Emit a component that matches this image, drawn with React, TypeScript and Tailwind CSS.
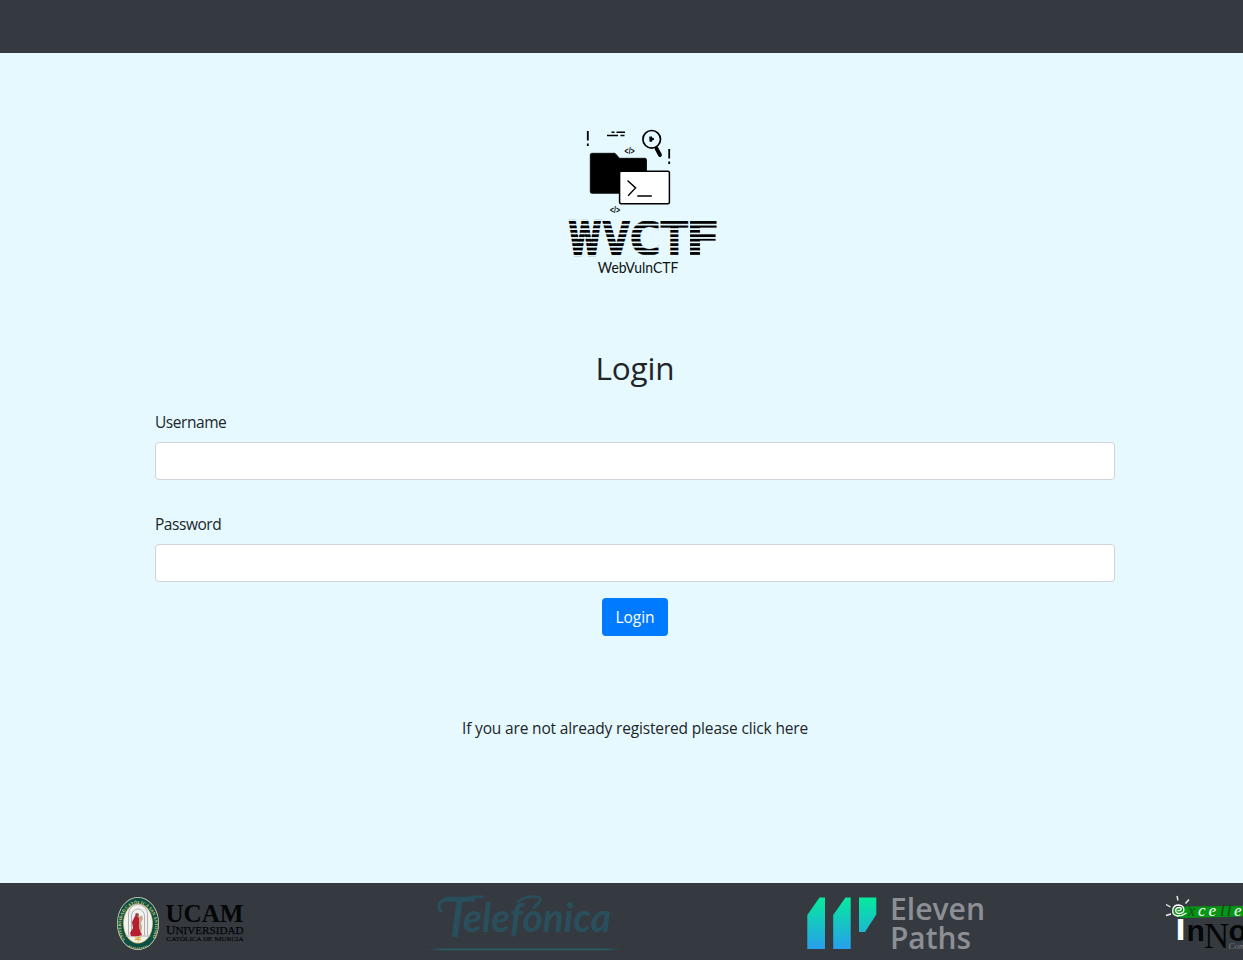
const LETTERS = [
  { char: "W", x: 568.8, width: 32.2, outline: 2.4 },
  { char: "V", x: 602.8, width: 27, outline: 1.4 },
  { char: "C", x: 629.5, width: 31.5, outline: 0.4 },
  { char: "T", x: 660.5, width: 27.6, outline: 0.4 },
  { char: "F", x: 685.5, width: 35, outline: 0.4 },
];

function AppLogo() {
  return (
    <svg className="block h-[160px] w-[165px]" viewBox="560 120 165 160" fill="none" stroke="#000">
      <defs>
        <pattern id="stripes" patternUnits="userSpaceOnUse" x="0" y="221.1" width="10" height="4.43">
          <rect width="10" height="2.7" fill="#000" stroke="none" />
        </pattern>
      </defs>
      <path d="M587.8 131v9.5M587.8 143.5v2.5M669.2 149v9.5M669.2 161.5v2.5" strokeWidth="1.8" />
      <path d="M611.5 132.3h3M616.5 132.3h8.5M607 135.5h11M620.5 135.5h4" strokeWidth="1.5" />
      <circle cx="651.7" cy="139.3" r="8.8" strokeWidth="1.7" />
      <path d="M656.5 148.5l3.5 6.5" strokeWidth="3.8" strokeLinecap="round" />
      <path d="M649.8 136.8l4.2 2.2-4 2.5ZM651.5 136.5v5.3" fill="#000" strokeWidth="1" />
      <path d="M590.3 154.8q0-1.5 1.5-1.5H615l4.5 5H645q1.5 0 1.5 1.5V193.3H591.8q-1.5 0-1.5-1.5Z" fill="#000" strokeWidth=".8" />
      <rect x="619.6" y="171.2" width="49.8" height="32.6" rx="1.5" fill="#fff" strokeWidth="1.5" />
      <path d="M627.5 180.5l8.1 7.4-7.5 7.8M637.3 196h14.5" strokeWidth="1.4" />
      <g className="font-['Liberation_Sans']" fontSize="9" fontWeight="bold" fill="#000" stroke="none">
        <text x="624.6" y="153.500" textLength="10" lengthAdjust="spacingAndGlyphs">&lt;/&gt;</text>
        <text x="610" y="212.500" textLength="10" lengthAdjust="spacingAndGlyphs">&lt;/&gt;</text>
      </g>
      <g className="font-['DejaVu_Sans']" fontSize="46" fontWeight="bold" fill="url(#stripes)" stroke="url(#stripes)">
        {LETTERS.map((l) => (
          <text key={l.char} x={l.x} y="254.8" textLength={l.width} lengthAdjust="spacingAndGlyphs" strokeWidth={l.outline}>
            {l.char}
          </text>
        ))}
      </g>
      <text x="597.8" y="272.6" textLength="80.5" lengthAdjust="spacingAndGlyphs" className="font-['Lato']" fontSize="15" fill="#111" stroke="none">
        WebVulnCTF
      </text>
    </svg>
  );
}

function UcamLogo() {
  return (
    <svg className="block h-[75px] w-[150px]" viewBox="105 885 150 75">
      <defs>
        <path id="ring" d="M125 940A17 22 0 1 1 151 940" />
      </defs>
      <ellipse cx="138" cy="923.5" rx="21" ry="26.5" fill="#e0dcc0" />
      <ellipse cx="138" cy="923.5" rx="20.3" ry="25.8" fill="#0c4f43" />
      <ellipse cx="138" cy="923.5" rx="14.9" ry="20" fill="#c9b96b" />
      <ellipse cx="138" cy="923.5" rx="14.2" ry="19.3" fill="#f1f1ef" />
      <text fontSize="4.4" fill="#d9cf83" className="font-['Liberation_Serif']" fontWeight="bold">
        <textPath href="#ring" textLength="88">UNIVERSIDAD CATÓLICA SAN ANTONIO</textPath>
      </text>
      <path d="M129 946q9 4.5 18 0" fill="none" stroke="#b8b178" strokeWidth="1.5" strokeDasharray="1.2 .8" />
      <path d="M128.5 935V914a9.5 9.5 0 0 1 19 0V935M131.5 935V916a6.5 7 0 0 1 13 0V935M125.5 936h25" fill="none" stroke="#b0b0b0" strokeWidth="1" />
      <path d="M135 916q3-1 4 2l1 5-1 4 3 8q-5 2-11 1l-1-3 3-5-1-6Z" fill="#b51f32" />
      <path d="M139 916.5l3-1 1 3-2 4 1 5-1 6-2-6Z" fill="#c5aa87" />
      <circle cx="137" cy="915" r="1.9" fill="#96404a" />
      <path d="M138 936v5.5M135 937.5l6 2.5M141 937l-6 3" stroke="#e2ab35" strokeWidth="1.1" />
      <g className="font-['Liberation_Serif']" fill="#050607">
        <text x="165.5" y="922" fontSize="25" fontWeight="bold" textLength="78" lengthAdjust="spacingAndGlyphs">UCAM</text>
        <text x="166" y="933.5" fontSize="12.5" textLength="77.5" lengthAdjust="spacingAndGlyphs" stroke="#050607" strokeWidth=".25">
          U<tspan fontSize="10.5">NIVERSIDAD</tspan>
        </text>
        <text x="166" y="940.8" fontSize="7" textLength="77.5" lengthAdjust="spacingAndGlyphs" stroke="#050607" strokeWidth=".15">
          C<tspan fontSize="6">ATÓLICA DE</tspan> M<tspan fontSize="6">URCIA</tspan>
        </text>
      </g>
    </svg>
  );
}

function TelefonicaLogo() {
  return (
    <svg className="block h-[77px] w-[210px]" viewBox="420 883 210 77">
      <defs>
        <linearGradient id="rule">
          <stop offset="0" stopColor="#28515f" stopOpacity="0" />
          <stop offset=".08" stopColor="#28606c" />
          <stop offset=".92" stopColor="#28606c" />
          <stop offset="1" stopColor="#28515f" stopOpacity="0" />
        </linearGradient>
      </defs>
      {/* Flourishes around the wordmark */}
      <path d="M450 898c-8 2-12 5-11 9 0 2 1 3 2 4" fill="none" stroke="#294f5d" strokeWidth="3" strokeLinecap="round" />
      <path d="M470 895.600h15.500q-3 3-9 3H470Z" fill="#294f5d" />
      <path d="M518 902c6-5 14-6 20-5 4 1 3 4-1 6.5" fill="none" stroke="#294f5d" strokeWidth="2.5" strokeLinecap="round" />
      <g fill="#294f5d" className="font-['Lato']" fontStyle="italic">
        <text x="441" y="937" textLength="32" lengthAdjust="spacingAndGlyphs" fontSize="57" fontWeight="400" stroke="#294f5d" strokeWidth=".5">T</text>
        <text x="463" y="932" textLength="148" lengthAdjust="spacingAndGlyphs" fontSize="40" fontWeight="700">elefónica</text>
      </g>
      <rect x="426" y="948.7" width="196" height="1.5" fill="url(#rule)" />
    </svg>
  );
}

function ElevenPathsLogo() {
  return (
    <svg className="block h-[75px] w-[200px]" viewBox="795 885 200 75">
      <defs>
        <linearGradient id="mark" gradientUnits="userSpaceOnUse" x1="0" y1="897" x2="0" y2="949">
          <stop offset="0" stopColor="#05eb9c" />
          <stop offset="1" stopColor="#279fec" />
        </linearGradient>
      </defs>
      <path d="M819.5 897.5H825V949H807.3V915ZM845.5 897.5H850.7V949H833.2V915ZM859 897.5H876.3V914.5L865 932H859Z" fill="url(#mark)" />
      <g className="font-['Open_Sans']" fill="#8d8f94" fontSize="30.5" fontWeight="600">
        <text x="890" y="920" textLength="95" lengthAdjust="spacingAndGlyphs">Eleven</text>
        <text x="890" y="949" textLength="81" lengthAdjust="spacingAndGlyphs">Paths</text>
      </g>
    </svg>
  );
}

function ExcelenciaLogo() {
  return (
    <svg className="block h-[75px] w-[93px]" viewBox="1150 885 93 75">
      <path d="M1173 907.5l14-1 56-.5v10.5l-60 1.5-9-2Z" fill="#079515" />
      <path d="M1166 904.5l4.5 2.5M1177 896l1 4.5M1189 899.5l-3.5 4M1166 915.5l5-1.5" stroke="#eee" strokeWidth="1.4" />
      <path d="M1177.5 910.5c4 1 5-3 2-3-5 0-5 6 0 6 6 0 6-8-1-8.5-7 0-8 10-1 11 4 0 7-1.5 9-3" fill="none" stroke="#fff" strokeWidth="1.3" />
      <text x="1175.200" y="940.3" fontSize="38" fontWeight="bold" fill="#fff" textLength="10.500" lengthAdjust="spacingAndGlyphs" className="font-['Liberation_Sans']">ı</text>
      <g className="font-['Liberation_Serif']" fontStyle="italic">
        <text x="1188" y="915.5" fontSize="16" fill="#17471c">x</text>
        <text x="1198" y="915.5" fontSize="17" fill="#fff" letterSpacing="3">ce</text>
        <text x="1220" y="915.5" fontSize="17" fill="#17471c" letterSpacing="2">ll</text>
        <text x="1234" y="915.5" fontSize="17" fill="#fff">e</text>
        <text x="1228.5" y="949" fontSize="9" fill="#777a80">Com</text>
      </g>
      <g fill="#050607">
        <text x="1186.5" y="940.5" fontSize="30" className="font-['Liberation_Sans']" fontWeight="bold">n</text>
        <text x="1204" y="947.5" fontSize="35" className="font-['Liberation_Serif']">N</text>
        <text x="1228.5" y="940.5" fontSize="30" className="font-['Liberation_Sans']" fontWeight="bold">o</text>
      </g>
    </svg>
  );
}

export default function App() {
  return (
    <div className="flex h-[960px] w-full flex-col overflow-hidden bg-[#e5f9ff] font-['Open_Sans','Noto_Sans',sans-serif] text-base text-[#212529]">
      <header className="h-[53px] shrink-0 bg-[#343a40]" />
      <main className="flex flex-1 flex-col pl-[155px] pr-[128px] pt-[67px]">
        <div className="flex pl-[405px]">
          <AppLogo />
        </div>
        <h1 className="mt-[68px] text-center text-[31.5px] leading-10 tracking-[-0.2px]">Login</h1>
        <form className="mt-[22px] flex flex-col" onSubmit={(e) => e.preventDefault()}>
          <label htmlFor="username" className="h-6 text-[15.5px] leading-[25px] tracking-[-0.45px]">Username</label>
          <input id="username" className="mt-2 h-[38px] rounded border border-[#ced4da] bg-white px-3 outline-none" />
          <label htmlFor="password" className="mt-8 h-6 text-[15.5px] leading-[25px] tracking-[-0.45px]">Password</label>
          <input id="password" type="password" className="mt-2 h-[38px] rounded border border-[#ced4da] bg-white px-3 outline-none" />
          <button className="mt-4 h-[38px] w-[66px] self-center rounded bg-[#007bff] pt-[2px] text-[15.5px] text-white">Login</button>
        </form>
        <p className="mt-20 text-center text-[15.5px] leading-[25px] tracking-[-0.16px]">If you are not already registered please click here</p>
      </main>
      <footer className="flex h-[77px] shrink-0 overflow-hidden bg-[#343a40] pl-[105px]">
        <div className="mt-[2px] shrink-0"><UcamLogo /></div>
        <div className="ml-[165px] shrink-0"><TelefonicaLogo /></div>
        <div className="ml-[165px] mt-[2px] shrink-0"><ElevenPathsLogo /></div>
        <div className="ml-[155px] mt-[2px] shrink-0"><ExcelenciaLogo /></div>
      </footer>
    </div>
  );
}
